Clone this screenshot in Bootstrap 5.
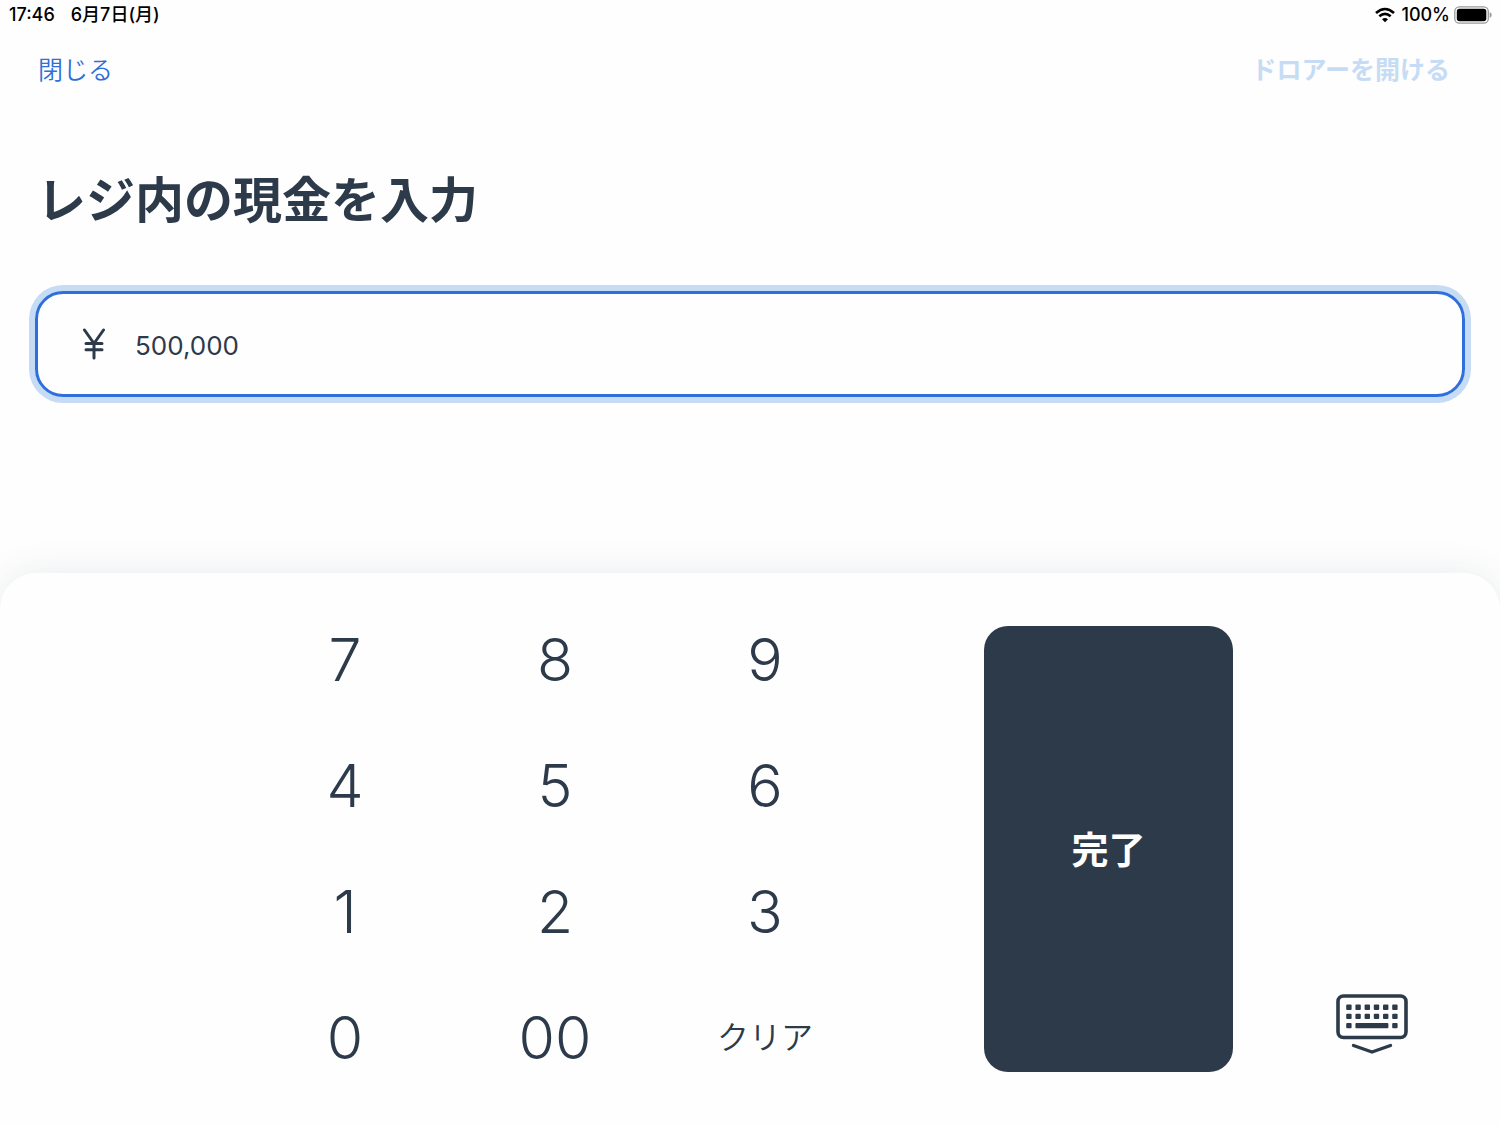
<!DOCTYPE html>
<html lang="ja">
<head>
<meta charset="utf-8">
<meta name="viewport" content="width=device-width, initial-scale=1">
<title>レジ内の現金を入力</title>
<link href="https://cdn.jsdelivr.net/npm/bootstrap@5.3.0/dist/css/bootstrap.min.css" rel="stylesheet">
<style>
  :root { --ink: #2d3a4a; --accent: #2f6fdb; --accent-soft: #c6dcf5; }
  body { font-family: Inter, "Noto Sans CJK JP", sans-serif; color: var(--ink); background: #fefefe; }
  .status-bar { height: 30px; padding: 0 8px 0 9px; font-size: 18px; line-height: 30px; font-weight: 500; color: #000; }
  .top-bar { height: 80px; padding: 0 50px 0 38px; }
  .top-bar .btn { font-size: 25px; line-height: 36px; font-weight: 350; color: var(--accent); }
  .top-bar .btn:disabled { color: var(--accent-soft); opacity: 1; font-weight: 600; }
  .entry { padding: 54px 35px 0; }
  .entry-title { font-size: 49px; line-height: 74px; font-weight: 600; padding-left: 2px; margin-bottom: 53px; }
  .amount-box { height: 106px; padding: 0 44px; gap: 29px; border: 3px solid var(--accent); border-radius: 28px; box-shadow: 0 0 0 6px var(--accent-soft); }
  .amount-box .form-control { font-size: 26px; line-height: 36px; color: var(--ink); }
  .amount-box .form-control:focus { box-shadow: none; background: transparent; }
  .sheet { padding: 24px 0; background: #fefefe; border-radius: 36px 36px 0 0; box-shadow: 0 0 36px rgba(45, 70, 90, .1); }
  .keypad { width: 42%; margin-left: 16%; display: grid; grid-template-columns: repeat(3, 1fr); grid-auto-rows: 126px; }
  .keypad .btn { font-size: 59px; line-height: 64px; font-weight: 300; color: var(--ink); }
  .keypad .btn.key-clear { font-size: 32px; font-weight: 350; }
  .done-wrap { width: 363px; padding: 29px 0 29px 114px; }
  .done-wrap .btn { font-size: 37px; font-weight: 600; color: #fff; background: var(--ink); border-radius: 24px; }
  .hide-wrap { padding: 0 0 47px 11px; }
</style>
</head>
<body>
<div class="d-flex flex-column min-vh-100 overflow-hidden">
  <div class="status-bar d-flex justify-content-between align-items-start">
    <div class="d-flex gap-3"><span>17:46</span><span>6月7日(月)</span></div>
    <div class="d-flex align-items-center">
      <svg class="me-1" width="22" height="16" viewBox="0 0 22 16" aria-hidden="true"><g fill="none" stroke="#000" stroke-width="2.6"><path d="M1 6Q10-2 19 6"/><path d="M4.3 9.3q5.700-5 11.400 0"/></g><path d="M7 12.200q3-2.600 6 0L10 15.200z"/></svg>
      <span class="me-1">100%</span>
      <svg width="38" height="18" viewBox="0 0 38 18" aria-hidden="true"><rect x=".8" y=".8" width="33.500" height="16.400" rx="4.500" fill="none" stroke="#999" stroke-width="1.300"/><rect x="2.800" y="2.800" width="29.500" height="12.400" rx="2.700"/><path d="M35.700 6q2 .8 2 3t-2 3z" fill="#999"/></svg>
    </div>
  </div>
  <header class="top-bar d-flex justify-content-between align-items-center">
    <button type="button" class="btn border-0 p-0">閉じる</button>
    <button type="button" class="btn border-0 p-0" disabled>ドロアーを開ける</button>
  </header>
  <main class="entry">
    <h1 class="entry-title"><label for="amount">レジ内の現金を入力</label></h1>
    <div class="amount-box d-flex align-items-center">
      <svg class="flex-shrink-0" width="24" height="32" viewBox="0 0 24 32" fill="none" stroke="#2d3a4a" stroke-width="3" stroke-linecap="round" stroke-linejoin="round" aria-hidden="true"><path d="M2.500 2 12 15.500 21.500 2M12 15.500V30M4 15.500h16M4 21.700h16"/></svg>
      <input id="amount" class="form-control border-0 bg-transparent p-0 pt-1" type="text" inputmode="numeric" value="500,000">
    </div>
  </main>
  <section class="sheet d-flex mt-auto">
    <div class="keypad">
      <button type="button" class="btn border-0 p-0">7</button>
      <button type="button" class="btn border-0 p-0">8</button>
      <button type="button" class="btn border-0 p-0">9</button>
      <button type="button" class="btn border-0 p-0">4</button>
      <button type="button" class="btn border-0 p-0">5</button>
      <button type="button" class="btn border-0 p-0">6</button>
      <button type="button" class="btn border-0 p-0">1</button>
      <button type="button" class="btn border-0 p-0">2</button>
      <button type="button" class="btn border-0 p-0">3</button>
      <button type="button" class="btn border-0 p-0">0</button>
      <button type="button" class="btn border-0 p-0">00</button>
      <button type="button" class="btn border-0 p-0 key-clear">クリア</button>
    </div>
    <div class="done-wrap d-flex"><button type="button" class="btn border-0 w-100 p-0 pt-1">完了</button></div>
    <div class="hide-wrap flex-grow-1 d-flex justify-content-center align-items-end">
      <button type="button" class="btn border-0 p-0 lh-1" aria-label="キーボードを隠す">
        <svg width="72" height="60" viewBox="0 0 72 60" fill="#2d3a4a" aria-hidden="true">
          <rect x="2" y="2" width="68" height="41.500" rx="5.500" fill="none" stroke="#2d3a4a" stroke-width="3.600"/>
          <g id="keys"><rect x="10.200" y="10.500" width="5.400" height="5.400" rx="1"/><rect x="19.400" y="10.500" width="5.400" height="5.400" rx="1"/><rect x="28.600" y="10.500" width="5.400" height="5.400" rx="1"/><rect x="37.800" y="10.500" width="5.400" height="5.400" rx="1"/><rect x="47" y="10.500" width="5.400" height="5.400" rx="1"/><rect x="56.200" y="10.500" width="5.400" height="5.400" rx="1"/></g>
          <use href="#keys" y="9.200"/>
          <rect x="10.200" y="28.900" width="5.400" height="5.400" rx="1"/><rect x="19.400" y="28.900" width="33" height="5.400" rx="1"/><rect x="56.200" y="28.900" width="5.400" height="5.400" rx="1"/>
          <path d="M17.500 51.500 36 58l18.500-6.500" fill="none" stroke="#2d3a4a" stroke-width="3.400" stroke-linecap="round" stroke-linejoin="round"/>
        </svg>
      </button>
    </div>
  </section>
</div>
<script src="https://cdn.jsdelivr.net/npm/bootstrap@5.3.0/dist/js/bootstrap.bundle.min.js"></script>
</body>
</html>
